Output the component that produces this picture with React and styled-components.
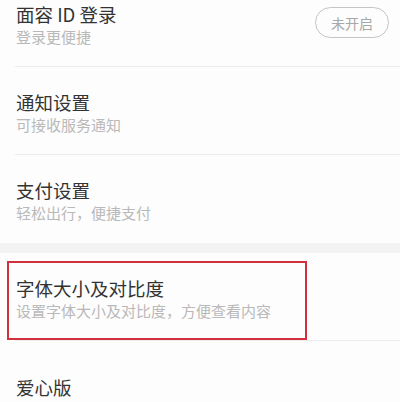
import React from "react";
import styled, { createGlobalStyle } from "styled-components";

const GlobalStyle = createGlobalStyle`
  html, body {
    margin: 0;
    padding: 0;
    background: #ffffff;
    overflow: hidden;
  }
  body {
    font-family: "Noto Sans CJK SC", "Noto Sans", sans-serif;
  }
`;

const Screen = styled.div`
  width: 400px;
  height: 402px;
  overflow: hidden;
  background: #fdfdfd;
`;

// the list is scrolled a little, so the first row is cut at the top
const Scroller = styled.div`
  margin-top: -21px;
`;

const Section = styled.div`
  background: #fdfdfd;
`;

const Band = styled.div`
  height: 10px;
  background: #f2f2f2;
`;

const Row = styled.div`
  position: relative;
  display: flex;
  align-items: center;
  justify-content: space-between;
  min-height: 88px;
  box-sizing: border-box;
  margin-left: 15px;
  padding: 22px 11px 18px 1px;
  border-bottom: ${({ $last }) => ($last ? "none" : "1px solid #ececec")};
`;

const Texts = styled.div`
  display: flex;
  flex-direction: column;
  gap: 2px;
`;

const Title = styled.div`
  font-size: 18.5px;
  line-height: 22px;
  color: #333333;
`;

const Sub = styled.div`
  font-size: 15px;
  line-height: 20px;
  color: #b9b9b9;
`;

const Pill = styled.div`
  width: 74px;
  height: 31px;
  box-sizing: border-box;
  border: 1.5px solid #c4c4c4;
  border-radius: 16px;
  display: flex;
  align-items: center;
  justify-content: center;
  font-size: 14px;
  color: #a8a8a8;
  margin-top: -4px;
`;

const Highlight = styled.div`
  position: absolute;
  left: -8px;
  top: 8px;
  width: 300px;
  height: 79px;
  box-sizing: border-box;
  border: 2px solid #d2303f;
  pointer-events: none;
`;

const top = [
  { title: "面容 ID 登录", sub: "登录更便捷", pill: "未开启" },
  { title: "通知设置", sub: "可接收服务通知" },
  { title: "支付设置", sub: "轻松出行，便捷支付" },
];

const bottom = [
  { title: "字体大小及对比度", sub: "设置字体大小及对比度，方便查看内容", marked: true },
  { title: "爱心版" },
];

const Item = ({ item, last }) => (
  <Row $last={last}>
    <Texts>
      <Title>{item.title}</Title>
      {item.sub && <Sub>{item.sub}</Sub>}
    </Texts>
    {item.pill && <Pill>{item.pill}</Pill>}
    {item.marked && <Highlight />}
  </Row>
);

export default function App() {
  return (
    <>
      <GlobalStyle />
      <Screen>
        <Scroller>
          <Section>
            {top.map((it, i) => (
              <Item key={it.title} item={it} last={i === top.length - 1} />
            ))}
          </Section>
          <Band />
          <Section>
            {bottom.map((it, i) => (
              <Item key={it.title} item={it} last={i === bottom.length - 1} />
            ))}
          </Section>
        </Scroller>
      </Screen>
    </>
  );
}
